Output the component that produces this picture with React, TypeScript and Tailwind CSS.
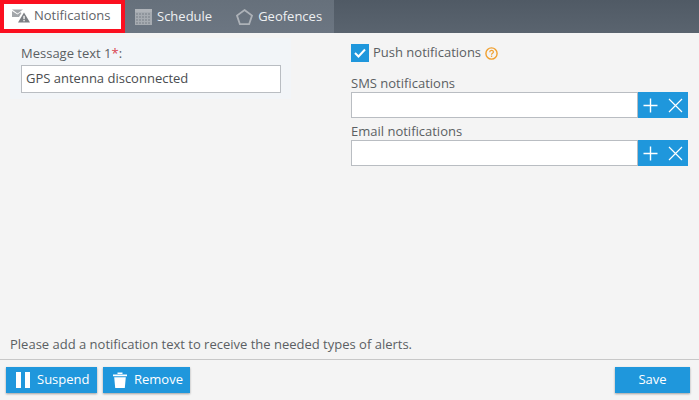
import React from 'react';

const font = { fontFamily: '"Open Sans", sans-serif' };

const TabMail = () => (
  <svg width="18" height="14" viewBox="0 0 18 14" fill="#a3a7ab">
    <path d="M0 0.5h11L5.5 4.5z" />
    <path d="M0 2v6h7l2.5-4-1.2-.8-2.8 2.3z" />
    <path d="M12 3.5L18 13.5H6z" fill="#7b7f84" />
    <rect x="11.4" y="6.8" width="1.3" height="3.4" fill="#fff" />
    <rect x="11.4" y="11" width="1.3" height="1.3" fill="#fff" />
  </svg>
);

const TabCalendar = () => (
  <svg width="17" height="16" viewBox="0 0 17 16">
    <rect width="17" height="16" fill="#a6abb1" />
    <rect width="17" height="3" fill="#b0b4b9" />
    {[1, 4, 7, 10, 13].map((x) =>
      [4, 7, 10, 13].map((y) => <rect key={`${x}-${y}`} x={x} y={y} width="2" height="2" fill="#8f959c" />),
    )}
  </svg>
);

const TabPentagon = () => (
  <svg width="17" height="16" viewBox="0 0 17 16" fill="none" stroke="#adb2b8" strokeWidth="1.8">
    <path d="M8.5 1.1L16 6.6l-2.9 8.6H3.9L1 6.6z" />
  </svg>
);

const AddRemove = () => (
  <div className="flex h-[26px] w-[50px] items-center justify-center gap-[10px] bg-[#1f97dc]">
    <svg width="15" height="15" viewBox="0 0 15 15" stroke="#fff" strokeWidth="1.4">
      <path d="M7.5 0.5v14M0.5 7.5h14" />
    </svg>
    <svg width="15" height="15" viewBox="0 0 15 15" stroke="#fff" strokeWidth="1.2">
      <path d="M1 1l13 13M14 1L1 14" />
    </svg>
  </div>
);

const ContactField = ({ label }: { label: string }) => (
  <div>
    <div className="h-[17px] text-[13px] leading-[17px] text-[#5b5f63]">{label}</div>
    <div className="flex h-[26px]">
      <div className="w-[287px] border border-[#b9bdc2] bg-white" />
      <AddRemove />
    </div>
  </div>
);

const ActionButton = ({ children, className }: { children: React.ReactNode; className: string }) => (
  <button className={`flex h-[26px] items-center bg-[#1f97dc] text-[13px] text-white shadow-[0_1px_2px_rgba(0,0,0,0.35)] ${className}`}>
    {children}
  </button>
);

export default function App() {
  return (
    <div className="flex h-[400px] w-[699px] flex-col overflow-hidden bg-[#f4f4f4]" style={font}>
      <div className="flex h-[33px] bg-gradient-to-b from-[#505a65] to-[#5a646f]">
        <div className="flex w-[125px] items-center gap-[4px] border-4 border-[#fb0f1f] bg-white pb-[1px] pl-[8px] text-[13px] text-[#5f6368]">
          <TabMail />
          <span>Notifications</span>
        </div>
        <div className="flex w-[209px] items-center bg-gradient-to-b from-[#66707b] to-[#6c7682] pl-[10px] text-[13px] text-[#eef0f2]">
          <TabCalendar />
          <span className="ml-[5px]">Schedule</span>
          <span className="ml-[24px]"><TabPentagon /></span>
          <span className="ml-[5px]">Geofences</span>
        </div>
      </div>

      <div className="flex flex-1">
        <div className="ml-[10px] mt-[5px] h-[61px] w-[281px] bg-[#f2f5f8] px-[11px] pt-[5px]">
          <div className="h-[22px] text-[13px] leading-[20px] text-[#5b5f63]">
            Message text 1<span className="text-[#d9434e]">*</span>:
          </div>
          <div className="flex h-[28px] w-[260px] items-center border border-[#b9bdc2] bg-white pl-[4px] text-[13px] text-[#4a4d50]">
            GPS antenna disconnected
          </div>
        </div>

        <div className="ml-[60px] flex flex-col pt-[11px]">
          <div className="flex h-[18px] items-center">
            <div className="flex h-[18px] w-[18px] items-center justify-center bg-[#1f97dc]">
              <svg width="12" height="10" viewBox="0 0 12 10" fill="none" stroke="#fff" strokeWidth="2">
                <path d="M1 5l3.5 3.5L11 1.5" />
              </svg>
            </div>
            <span className="ml-[4px] text-[13px] text-[#5b5f63]">Push notifications</span>
            <svg className="ml-[4px]" width="13" height="13" viewBox="0 0 13 13" fill="none">
              <circle cx="6.5" cy="6.5" r="5.6" stroke="#f0a030" strokeWidth="1.4" />
              <path d="M4.7 5.2c0-2.4 3.7-2.4 3.7-.2 0 1.3-1.9 1.4-1.9 2.7" stroke="#f0a030" strokeWidth="1.2" />
              <rect x="5.9" y="8.6" width="1.3" height="1.3" fill="#f0a030" />
            </svg>
          </div>
          <div className="mt-[13px] flex flex-col gap-[5px]">
            <ContactField label="SMS notifications" />
            <ContactField label="Email notifications" />
          </div>
        </div>
      </div>

      <div className="h-[26px] pl-[10px] text-[13px] leading-[22px] text-[#5b5f63]">
        Please add a notification text to receive the needed types of alerts.
      </div>

      <div className="flex h-[41px] justify-between border-t border-[#c8c8c8] pl-[6px] pr-[9px] pt-[7px]">
        <div className="flex gap-[6px]">
          <ActionButton className="w-[91px] gap-[7px] pl-[10px]">
            <span className="flex gap-[4px]">
              <span className="h-[16px] w-[5px] bg-white" />
              <span className="h-[16px] w-[5px] bg-white" />
            </span>
            Suspend
          </ActionButton>
          <ActionButton className="w-[87px] gap-[7px] pl-[10px]">
            <svg width="14" height="16" viewBox="0 0 14 16" fill="#fff">
              <path d="M0 2.5h14v1.8H0zM4.5 0.5h5v1.4h-5zM1.2 5.2h11.6L11.8 16H2.2z" />
            </svg>
            Remove
          </ActionButton>
        </div>
        <ActionButton className="w-[75px] justify-center">Save</ActionButton>
      </div>
    </div>
  );
}
